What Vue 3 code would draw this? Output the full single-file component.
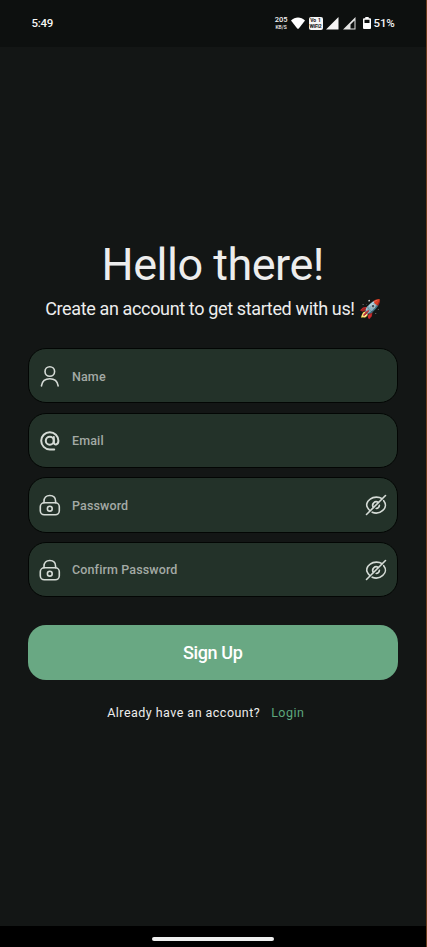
<script setup>
import { ref } from 'vue'

const fields = ref([
  { label: 'Name', icon: 'user', secret: false },
  { label: 'Email', icon: 'at', secret: false },
  { label: 'Password', icon: 'lock', secret: true },
  { label: 'Confirm Password', icon: 'lock', secret: true },
])
</script>

<template>
  <div class="screen">
    <header class="status">
      <span class="time">5:49</span>
      <div class="indicators">
        <div class="speed"><b>205</b><small>KB/S</small></div>
        <svg class="wifi" viewBox="0 0 14 12"><path d="M0 3.400C4-.6 10-.6 14 3.400L8 11.200Q7 12.400 6 11.200Z" fill="#fff" /></svg>
        <div class="volte"><span>Vo&nbsp; 1</span><span>WiFi2</span></div>
        <svg class="signal" viewBox="0 0 13 13"><path d="M12.500 0V12.500H0Z" fill="#f5f5f5" /></svg>
        <svg class="signal second" viewBox="0 0 13 13"><path d="M12.500 0V12.500H0ZM11.500 3.500L7.500 7.500V11.500H11.500Z" fill="#e4e4e4" fill-rule="evenodd" /></svg>
        <svg class="battery" viewBox="0 0 8 12"><path d="M2.300 0h3.400v1.200H7a1 1 0 0 1 1 1V11a1 1 0 0 1-1 1H1a1 1 0 0 1-1-1V2.200a1 1 0 0 1 1-1h1.300ZM1.500 2.700V6h5V2.700Z" fill="#fff" fill-rule="evenodd" /></svg>
        <span class="percent">51%</span>
      </div>
    </header>

    <main class="content">
      <h1>Hello there!</h1>
      <p class="subtitle">Create an account to get started with us! <span class="emoji">🚀</span></p>

      <form class="form" @submit.prevent>
        <div v-for="field in fields" :key="field.label" class="field">
          <svg v-if="field.icon === 'user'" class="icon" viewBox="0 0 22 22">
            <circle cx="10.800" cy="6.500" r="4.800" />
            <path d="M2.500 21v-.4C3.200 16.300 6.600 13.800 10.800 13.800s7.600 2.500 8.300 6.800v.4" />
          </svg>
          <svg v-else-if="field.icon === 'at'" class="icon at" viewBox="0 0 22 22">
            <circle cx="10.800" cy="10.800" r="4" />
            <path d="M14.800 7v5.200c0 3.500 4.600 3 4.600-1.400A8.600 8.600 0 1 0 10.800 19.400h4.400" />
          </svg>
          <svg v-else class="icon" viewBox="0 0 22 22">
            <path d="M5 8.800V7.200C5 3.500 7.200 1.500 10.800 1.500s5.800 2 5.800 5.700v1.600" />
            <rect x="1.300" y="8.800" width="19" height="12" rx="4" />
            <circle cx="10.800" cy="14.700" r="2.400" />
          </svg>
          <span class="label">{{ field.label }}</span>
          <svg v-if="field.secret" class="icon eye" viewBox="0 0 22 22">
            <path d="M17 4.700C14.400 2.700 8.600 2.300 5.200 5.100C1.500 7.700 1 11.500 2.500 13.500Q3.200 15 4.800 16.500" />
            <path d="M7.200 18.200C10.500 19.600 15 18.800 17.800 16.300C21.300 13.400 20.900 9.500 18.700 6.700" />
            <path d="M13.300 8.500A3.500 3.500 0 0 0 8.400 13.400M14.400 11.300A3.400 3.400 0 0 1 11.200 14.500" />
            <path d="M1.500 20.500l19-19" />
          </svg>
        </div>
        <button class="submit" type="submit">Sign Up</button>
      </form>

      <p class="switch"><span>Already have an account?</span><a>Login</a></p>
    </main>

    <footer class="navbar"><i class="handle"></i></footer>
  </div>
</template>

<style>
body { background: #141615; }
</style>

<style scoped>
.screen {
  box-sizing: border-box;
  width: 427px;
  height: 947px;
  display: flex;
  flex-direction: column;
  background: #131615;
  border-right: 1px solid #69391a;
  font-family: Roboto, sans-serif;
  color: #ededed;
  overflow: hidden;
}
.status {
  height: 47px;
  flex: none;
  box-sizing: border-box;
  padding: 0 31.500px 1px 31.500px;
  display: flex;
  align-items: center;
  justify-content: space-between;
  background: #0d100f;
  color: #f5f5f5;
}
.time { font-size: 11.500px; font-weight: 500; letter-spacing: -.25px; }
.indicators { display: flex; align-items: center; }
.speed { display: flex; flex-direction: column; align-items: center; width: 13px; margin-right: 3px; }
.speed b { font-size: 7.500px; line-height: 8px; font-weight: 500; }
.speed small { font-size: 5px; line-height: 6px; font-weight: 500; }
.wifi { width: 14px; height: 12px; margin-right: 4px; }
.volte {
  width: 14px;
  height: 13px;
  margin-right: 3.500px;
  border-radius: 2px;
  background: #f5f5f5;
  color: #111;
  display: flex;
  flex-direction: column;
  align-items: center;
  justify-content: center;
  font-size: 5px;
  line-height: 6px;
  font-weight: 700;
  letter-spacing: -.15px;
  white-space: nowrap;
}
.signal { width: 13px; height: 13px; margin-right: 4px; }
.second { margin-right: 6.500px; }
.battery { width: 8px; height: 12px; margin-right: 3px; }
.percent { font-size: 11.500px; font-weight: 500; letter-spacing: -.2px; }
.content {
  flex: 1;
  display: flex;
  flex-direction: column;
  align-items: center;
  padding: 191px 28px 0 27.500px;
}
h1 { margin: 0; font-size: 45px; line-height: 53px; font-weight: 400; letter-spacing: -.5px; white-space: nowrap; }
.subtitle { margin: 8px 0 0; font-size: 18px; line-height: 20px; letter-spacing: -.36px; white-space: nowrap; }
.form { width: 100%; margin-top: 29px; display: flex; flex-direction: column; gap: 9.200px; }
.field {
  box-sizing: border-box;
  height: 55.400px;
  padding: 1px 10.500px 0;
  display: flex;
  align-items: center;
  border: 1px solid #030604;
  border-radius: 18px;
  background: #233229;
}
.icon { width: 22px; height: 22px; flex: none; fill: none; stroke: #d5dbd6; stroke-width: 1.600; stroke-linecap: round; stroke-linejoin: round; }
.at { stroke-width: 2; }
.label { margin-left: 11px; font-size: 12.500px; font-weight: 500; color: #a3aaa5; letter-spacing: .13px; }
.eye { margin-left: auto; }
.submit {
  height: 55.600px;
  margin: 18.500px 0 0;
  padding: 0;
  border: 0;
  border-radius: 18px;
  background: #69a883;
  color: #fff;
  font: 500 18px/20px Roboto, sans-serif;
  letter-spacing: -.4px;
}
.switch { margin: 24.600px 0 0; padding-right: 14px; font-size: 12.500px; line-height: 16px; letter-spacing: .47px; display: flex; gap: 11px; white-space: nowrap; }
.switch a { color: #5da77d; }
.navbar { flex: none; height: 21px; display: flex; justify-content: center; align-items: center; padding-top: 4px; box-sizing: border-box; background: #000; }
.handle { width: 122px; height: 4px; border-radius: 2px; background: #efefef; }
</style>
